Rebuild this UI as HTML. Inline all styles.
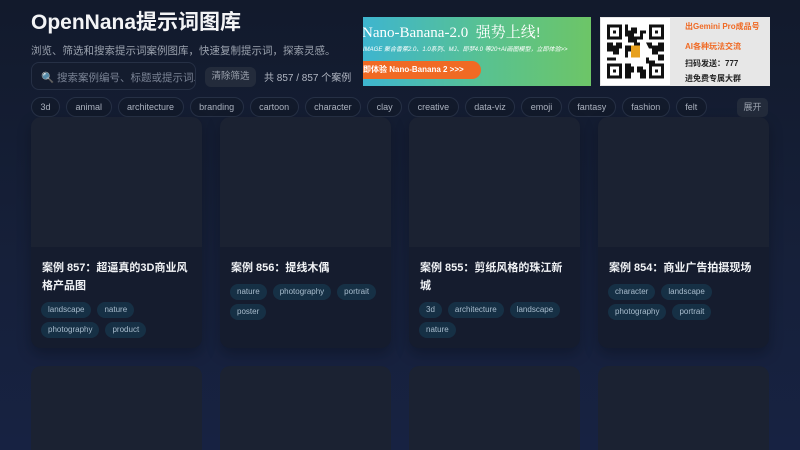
<!DOCTYPE html>
<html><head><meta charset="utf-8"><style>
*{margin:0;padding:0;box-sizing:border-box}
html,body{width:800px;height:450px;overflow:hidden}
body{background:linear-gradient(180deg,#121a2c 0%,#16203a 60%,#172242 100%);font-family:"Liberation Sans","Noto Sans CJK SC",sans-serif;color:#e5e7eb;position:relative}
.abs{position:absolute}
h1{position:absolute;left:31px;top:6px;font-size:21px;font-weight:bold;color:#f3f4f6}
.sub{left:31px;top:43px;font-size:10.5px;color:#9ca3af}
.search{left:31px;top:62px;width:165px;height:28px;border:1px solid #263045;border-radius:8px;background:#141c2e;font-size:10.5px;color:#7b8496;padding:7px 0 0 9px;white-space:nowrap;overflow:hidden}
.clr{left:205px;top:67px;width:51px;height:20px;background:#232b3b;border-radius:6px;font-size:9.5px;color:#9ca3af;text-align:center;line-height:20px}
.cnt{left:264px;top:69px;font-size:10px;color:#b0b6c2}
.tags{left:31px;top:97px;display:flex;gap:6px}
.tag{height:20px;padding:0 8.5px;border:1px solid #263045;border-radius:10px;font-size:9px;line-height:18px;color:#aab1be;background:#121a2b}
.exp{left:737px;top:98px;width:31px;height:19px;background:#232b3b;border-radius:5px;font-size:9px;color:#9ca3af;text-align:center;line-height:19px}
.ban{left:363px;top:17px;width:228px;height:69px;background:linear-gradient(90deg,#3eb5cf 0%,#59c28f 55%,#6dc567 100%);overflow:hidden}
.ban .t{position:absolute;left:-1px;top:4px;font-family:"Liberation Serif","Noto Serif CJK SC",serif;font-size:15px;color:#fff;white-space:nowrap}
.ban .s{position:absolute;left:0;top:27px;font-size:6px;color:#fff;font-style:italic;white-space:nowrap}
.ban .b{position:absolute;left:-12px;top:44px;width:130px;height:18px;border-radius:9px;background:#f06a24;color:#fff;font-size:8px;font-weight:bold;line-height:18px;padding-left:12px;white-space:nowrap}
.qr{left:600px;top:17px;width:170px;height:69px;background:#e7e7e7}
.qr .w{position:absolute;left:1px;top:1px;width:69px;height:67px;background:#fff}
.qr p{position:absolute;left:85px;font-size:8px;font-weight:bold;white-space:nowrap}
.card{width:171px;height:231px;top:117px;border-radius:10px;overflow:hidden;background:#151c2e;box-shadow:0 6px 14px rgba(0,0,0,.25)}
.card .img{height:130px;background:#1b2232}
.card h3{font-size:11px;font-weight:bold;color:#f1f3f6;margin:12px 11px 0;line-height:18px}
.card .ct{display:flex;flex-wrap:wrap;gap:4px 6px;margin:7px 10px 0}
.card .ct span{height:16px;padding:0 7px;border-radius:8px;background:#163045;font-size:8px;line-height:16px;color:#a8bccd}
.card2{width:171px;height:100px;top:366px;border-radius:10px;background:#1b2232}
</style></head><body>
<h1>OpenNana提示词图库</h1>
<div class="abs sub">浏览、筛选和搜索提示词案例图库，快速复制提示词，探索灵感。</div>
<div class="abs search">🔍 搜索案例编号、标题或提示词...</div>
<div class="abs clr">清除筛选</div>
<div class="abs cnt">共 857 / 857 个案例</div>
<div class="abs tags"><span class="tag">3d</span><span class="tag">animal</span><span class="tag">architecture</span><span class="tag">branding</span><span class="tag">cartoon</span><span class="tag">character</span><span class="tag">clay</span><span class="tag">creative</span><span class="tag">data-viz</span><span class="tag">emoji</span><span class="tag">fantasy</span><span class="tag">fashion</span><span class="tag">felt</span></div>
<div class="abs exp">展开</div>
<div class="abs ban"><div class="t">Nano-Banana-2.0&nbsp; 强势上线!</div><div class="s">IMAGE 聚合香蕉2.0、1.0系列、MJ、即梦4.0 等20+AI画图模型，立即体验>></div><div class="b">即体验 Nano-Banana 2 >>></div></div>
<div class="abs qr"><div class="w"><svg width="69" height="67" viewBox="0 0 23 22">
<g fill="#111"><rect x="2" y="2" width="5" height="5"/><rect x="16" y="2" width="5" height="5"/><rect x="2" y="15" width="5" height="5"/><rect x="16" y="15" width="5" height="5"/></g>
<g fill="#fff"><rect x="3" y="3" width="3" height="3"/><rect x="17" y="3" width="3" height="3"/><rect x="3" y="16" width="3" height="3"/><rect x="17" y="16" width="3" height="3"/></g>
<g fill="#111"><rect x="4" y="4" width="1" height="1"/><rect x="18" y="4" width="1" height="1"/><rect x="4" y="17" width="1" height="1"/><rect x="18" y="17" width="1" height="1"/>
<path d="M8 2h1v2h1v-1h2v2h-1v1h2v-2h2v1h-1v2h-2v1h1v1h-2v-1h-2v-2h-1zM2 8h2v1h1v-1h2v2h-1v2h-2v-1h-2zM8 9h2v2h-1v2h-1zM15 8h2v1h2v-1h2v3h-2v1h-2v-2h-1zM2 13h3v1h-3zM8 15h2v1h1v2h-1v2h-2zM12 16h2v1h1v3h-2v-2h-1zM15 13h1v1h2v1h-3zM19 12h2v2h-2z"/></g>
<rect x="10" y="9" width="3" height="4" fill="#e7a01d"/></svg></div>
<p style="top:4px;color:#f06a24">出Gemini Pro成品号</p>
<p style="top:24px;color:#f06a24">AI各种玩法交流</p>
<p style="top:41px;color:#222">扫码发送：777</p>
<p style="top:56px;color:#222">进免费专属大群</p></div>

<div class="abs card" style="left:31px"><div class="img"></div><h3>案例 857：超逼真的3D商业风格产品图</h3><div class="ct"><span>landscape</span><span>nature</span><span>photography</span><span>product</span></div></div>
<div class="abs card" style="left:220px"><div class="img"></div><h3>案例 856：提线木偶</h3><div class="ct"><span>nature</span><span>photography</span><span>portrait</span><span>poster</span></div></div>
<div class="abs card" style="left:409px"><div class="img"></div><h3>案例 855：剪纸风格的珠江新城</h3><div class="ct"><span>3d</span><span>architecture</span><span>landscape</span><span>nature</span></div></div>
<div class="abs card" style="left:598px"><div class="img"></div><h3>案例 854：商业广告拍摄现场</h3><div class="ct"><span>character</span><span>landscape</span><span>photography</span><span>portrait</span></div></div>
<div class="abs card2" style="left:31px"></div><div class="abs card2" style="left:220px"></div><div class="abs card2" style="left:409px"></div><div class="abs card2" style="left:598px"></div>
</body></html>
